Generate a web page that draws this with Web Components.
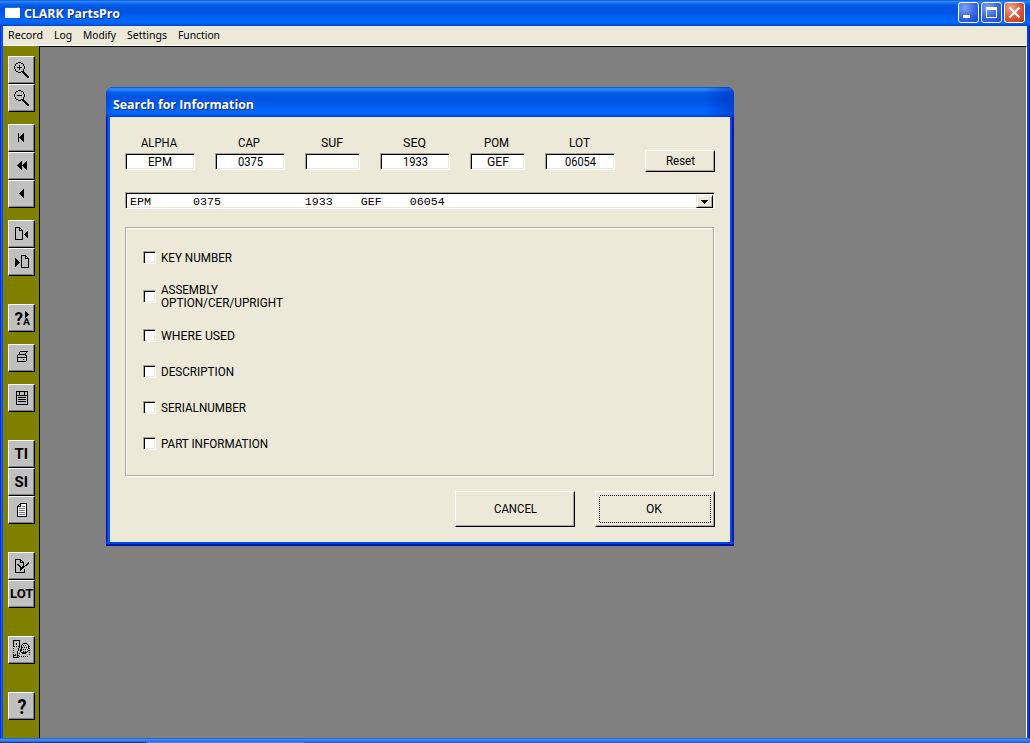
<!DOCTYPE html>
<html lang="en">
<head>
<meta charset="utf-8">
<title>CLARK PartsPro</title>
<style>
html, body { margin: 0; width: 1030px; height: 743px; overflow: hidden; }
body { font: 12.5px/14px Roboto, "Liberation Sans", sans-serif; color: #000; }
</style>
</head>
<body>
<pp-app></pp-app>

<script>
// Pixel icons: x/y is the top left corner inside the 27x28 tool button.
const TRI = ['....X', '...XX', '..XXX', '.XXXX', 'XXXXX', '.XXXX', '..XXX', '...XX', '....X'];
const LENS = (plus) => [
    '....XXX',
    '..XX...XX',
    '.X.......X',
    plus ? '.X...X...X' : '.X.......X',
    plus ? 'X....X....X' : 'X.........X',
    'X..XXXXX..X',
    plus ? 'X....X....X' : 'X.........X',
    plus ? '.X...X...X' : '.X.......X',
    '.X.......X',
    '..XX...XXX',
    '....XXX.XXX',
    '.........XXX',
    '..........XXX',
    '...........XXX',
    '............XXX',
    '.............XX'
];
const ICONS = {
    zoomin: { x: 6, y: 6, rows: LENS(true) },
    zoomout: { x: 6, y: 6, rows: LENS(false) },
    first: { x: 10, y: 9, rows: TRI.map(r => 'X' + r) },
    rewind: { x: 9, y: 9, rows: TRI.map(r => r + r) },
    prev: { x: 11, y: 9, rows: TRI },
    docprev: { x: 7, y: 7, rows: [
        'XXXXX', 'X...XX', 'X...X.X', 'X...XXXX', 'X......X....X', 'X......X...XX', 'X......X..XXX',
        'X......X.XXXX', 'X......X..XXX', 'X......X...XX', 'X......X....X', 'X......X', 'XXXXXXXX'] },
    docnext: { x: 7, y: 7, rows: [
        '......XXXXX', '......X...XX', '......X...X.X', 'X.....X...XXXX', 'XX....X......X', 'XXX...X......X', 'XXXX..X......X',
        'XXXXX.X......X', 'XXXX..X......X', 'XXX...X......X', 'XX....X......X', 'X.....X......X', '......XXXXXXXX'] },
    play: { x: 17, y: 7, rows: ['X', 'XX', 'XXX', 'XXXX', 'XXX', 'XX', 'X'] },
    print: { x: 9, y: 7, rows: [
        '...XXXXXXXX', '..X......X', '..X.....X', '.XXXXXXXX', 'X.......XX', 'X........X', 'XXXXXXXXXX',
        'X........X', 'X.....X..X', 'X........X', 'XXXXXXXXX'] },
    form: { x: 8, y: 7, rows: [
        'XXXXXXXXXXXX', 'X..X....X..X', 'X..X....X..X', 'X..X....X..X', 'XXXXXXXXXXXX', 'X..........X', 'X.XXXXXXXX.X',
        'X..........X', 'X.XXXXXXXX.X', 'X..........X', 'X.XXXXXXXX.X', 'X..........X', 'X..........X', 'XXXXXXXXXXXX'] },
    pages: { x: 9, y: 7, rows: [
        '...XXXXXXX', '..XXwwwwwX', '.XwXwwwwwX', 'XXXXwgggwX', 'XwwwwwwwwX', 'XwggggggwX', 'XwwwwwwwwX',
        'XwggggggwX', 'XwwwwwwwwX', 'XwggggggwX', 'XwwwwwwwwX', 'XwggggggwX', 'XwwwwwwwwX', 'XXXXXXXXXX'] },
    edit: { x: 7, y: 7, rows: [
        'XXXXXX', 'X....XX', 'X....X.X', 'X....XXXX....X', 'X.......X...XX', 'X.XX....X..XX', 'X..XX...X.XX',
        'X...XX.XXX', 'X....XXXX', 'X....XXX', 'X....XX..X', 'X....X...X', 'X........X', 'XXXXXXXXXX'] },
    parts: { x: 5, y: 4, rows: [
        'XXXXXXX', 'X.....X', 'X.....X', 'X..X..X...XXXX', 'X..X..X..X....X', 'X.....X.X.X.X..X', 'XX.X.XX.X......XX',
        '......X.XX.X.X.X', 'X....X..X......XX', '.....X.XX.X.X.X.', 'X....X.XX......XX', '....X..X..X.X.X', 'X...X...XXXXXX..X', '....X.X..XXXX',
        'X.X.X...........X', 'XXX.XX', 'X...X.X.X.X.X.X', 'XXXXXX'] }
};
const INKS = { X: '#000', w: '#fff', g: '#777' };

function bitmap(name) {
    const icon = ICONS[name];
    if (!icon) return '';
    let out = '';
    icon.rows.forEach((row, j) => {
        for (const m of row.matchAll(/X+|w+|g+/g)) {
            out += '<rect x="' + (icon.x + m.index) + '" y="' + (icon.y + j) + '" width="' + m[0].length +
                '" height="1" fill="' + INKS[m[0][0]] + '"/>';
        }
    });
    return out;
}

function define(name, html, setup) {
    const tpl = document.createElement('template');
    tpl.innerHTML = html;
    customElements.define(name, class extends HTMLElement {
        connectedCallback() {
            if (this.shadowRoot) return;
            this.attachShadow({ mode: 'open' }).appendChild(tpl.content.cloneNode(true));
            if (setup) setup(this, this.shadowRoot);
        }
    });
}

// One line of text condensed or stretched to a set width.
define('pp-text', `
<style>
:host { display: flex; flex: none; text-align: left; }
span { flex: none; white-space: nowrap; transform-origin: 0 50%; }
</style>
<span><slot></slot></span>`, (el, root) => {
    const w = +el.getAttribute('w');
    const span = root.querySelector('span');
    span.style.transform = 'scaleX(' + w / span.getBoundingClientRect().width + ')';
    el.style.width = w + 'px';
});

define('pp-tool', `
<style>
:host { display: block; position: relative; box-sizing: border-box; width: 27px; height: 28px; background: #c0c0c0;
    border: 1px solid #000; border-color: #fff #000 #000 #fff; box-shadow: inset -1px -1px #808080; }
:host([gap="s"]) { margin-top: 12px; }
:host([gap="l"]) { margin-top: 28px; }
svg { position: absolute; left: -1px; top: -1px; width: 27px; height: 28px; }
text { font: bold 15px Roboto, "Liberation Sans", sans-serif; }
</style>
<svg viewBox="0 0 27 28"><g shape-rendering="crispEdges"></g></svg>`, (el, root) => {
    const svg = root.querySelector('svg');
    svg.querySelector('g').innerHTML = bitmap(el.getAttribute('icon'));
    for (const part of (el.getAttribute('label') || '').split(';').filter(Boolean)) {
        const [s, x, y, size, w] = part.split(',');
        svg.insertAdjacentHTML('beforeend', '<text x="' + x + '" y="' + y + '" textLength="' + w +
            '" lengthAdjust="spacingAndGlyphs" style="font-size:' + size + 'px">' + s + '</text>');
    }
});

define('pp-toolbar', `
<style>
:host { display: flex; flex-direction: column; box-sizing: border-box; width: 37px; padding: 10px 0 0 5px;
    background: #808000; border-right: 1px solid #000; }
</style>
<slot></slot>`);

define('pp-menubar', `
<style>
:host { display: flex; gap: 11px; box-sizing: border-box; height: 20px; padding: 1px 0 0 5px; background: #ece9d8;
    border-bottom: 1px solid #fff; font: 11px/15px "Noto Sans", "Open Sans", sans-serif; }
</style>
<slot></slot>`);

define('pp-caption-button', `
<style>
:host { display: block; box-sizing: border-box; width: 21px; height: 21px; border: 1px solid #fff; border-radius: 3px;
    background: radial-gradient(circle at 30% 25%, #7ea2f5, #3c68e4 50%, #2453d4 80%, #1e49c4); }
:host([kind="close"]) { background: radial-gradient(circle at 30% 25%, #f0a088, #e0583a 50%, #d0431d 80%, #b5320f); }
svg { display: block; width: 19px; height: 19px; }
</style>
<svg viewBox="0 0 19 19" fill="none" stroke="#fff"></svg>`, (el, root) => {
    root.querySelector('svg').innerHTML = {
        min: '<path fill="#fff" stroke="none" d="M4 12h7v3H4z"/>',
        max: '<path fill="#fff" stroke="none" fill-rule="evenodd" d="M4 4h11v11H4zM5 7v7h9V7z"/>',
        close: '<path stroke-width="2.2" d="M4.5 4.5l10 10M14.5 4.5l-10 10"/>'
    }[el.getAttribute('kind')];
});

define('pp-titlebar', `
<style>
:host { display: flex; align-items: center; box-sizing: border-box; height: 26px; padding: 0 5px 1px; color: #fff;
    background: linear-gradient(#0848c8 0, #2a86f8 4%, #2480f4 8%, #0460ea 17%, #0054e3 30%, #0055e5 50%, #0066fc 75%, #0266ff 88%, #0052e0 95%, #0040c0);
    font: bold 13px/18px "Open Sans", "Noto Sans", sans-serif; text-shadow: 1px 1px #0a2f8f; }
.icon { width: 15px; height: 11px; margin: 0 4px 0 0; }
.name { flex: 1; display: flex; }
.buttons { display: flex; gap: 2px; }
</style>
<svg class="icon" viewBox="0 0 15 11" shape-rendering="crispEdges">
    <path fill="#fff" d="M0 0h15v11H0z"/><path fill="#1c70e8" d="M0 0h15v1H0z"/><path fill="#e86038" d="M12 0h2v1h-2z"/>
</svg>
<div class="name"><slot></slot></div>
<div class="buttons">
    <pp-caption-button kind="min"></pp-caption-button>
    <pp-caption-button kind="max"></pp-caption-button>
    <pp-caption-button kind="close"></pp-caption-button>
</div>`);

define('pp-field', `
<style>
:host { display: flex; flex-direction: column; align-items: center; width: 70px; }
:host([short]) { width: 55px; }
.label { height: 18px; line-height: 15px; padding-right: 2px; }
.box { display: flex; justify-content: center; box-sizing: border-box; width: 100%; height: 17px; background: #fff; line-height: 15px;
    border: 1px solid #fff; border-color: #aca899 #fff #fff #aca899; box-shadow: inset 1px 1px #000, inset -1px -1px #ece9d8; }
</style>
<div class="label"><slot name="label"></slot></div>
<div class="box"><slot></slot></div>`);

define('pp-button', `
<style>
:host { display: flex; align-items: center; justify-content: center; position: relative; box-sizing: border-box;
    width: 120px; height: 36px; background: #ece9d8; border: 1px solid #000; border-color: #fff #000 #000 #fff;
    box-shadow: inset -1px -1px #aca899; }
:host([small]) { width: 70px; height: 22px; }
rect { fill: none; stroke: #000; stroke-dasharray: 1 1; }
svg { display: none; position: absolute; left: 3px; top: 3px; width: 112px; height: 28px; }
:host([focused]) { padding-right: 3px; }
:host([focused]) svg { display: block; }
</style>
<slot></slot>
<svg shape-rendering="crispEdges"><rect x=".5" y=".5" width="111" height="27"/></svg>`);

define('pp-combo', `
<style>
:host { display: flex; box-sizing: border-box; height: 17px; padding: 2px 1px 1px 4px; background: #fff;
    border: 1px solid #fff; border-color: #aca899 #fff #fff #aca899; box-shadow: inset 1px 1px #000, inset -1px -1px #ece9d8; }
.value { flex: 1; white-space: pre; font: 11.67px/15px "Liberation Mono", monospace; }
.drop { box-sizing: border-box; width: 17px; height: 13px; background: #ece9d8;
    border: 1px solid #000; border-color: #ece9d8 #000 #000 #ece9d8; box-shadow: inset 1px 1px #fff, inset -1px -1px #aca899; }
svg { display: block; width: 15px; height: 11px; }
</style>
<div class="value"><slot></slot></div>
<div class="drop"><svg viewBox="0 0 15 11" shape-rendering="crispEdges">
    <path d="M4 4h7v1H4zM5 5h5v1H5zM6 6h3v1H6zM7 7h1v1H7z"/></svg></div>`);

define('pp-check', `
<style>
:host { display: flex; align-items: center; gap: 5px; height: 13px; line-height: 13px; }
.box { flex: none; box-sizing: border-box; width: 13px; height: 13px; background: #fff;
    border: 1px solid #fff; border-color: #aca899 #fff #fff #aca899; box-shadow: inset 1px 1px #000, inset -1px -1px #ece9d8; }
.text { display: flex; flex-direction: column; padding-bottom: 1px; }
</style>
<div class="box"></div>
<div class="text"><slot></slot></div>`);

define('pp-group', `
<style>
:host { display: flex; flex-direction: column; gap: 23px; box-sizing: border-box; height: 250px; padding: 23px 0 0 17px;
    border: 1px solid #aca899; border-right-color: #fff; border-bottom-color: #fff;
    box-shadow: inset 1px 1px #fff, inset -1px -1px #aca899; }
</style>
<slot></slot>`);

define('pp-dialog', `
<style>
:host { display: flex; flex-direction: column; box-sizing: border-box; width: 628px; height: 459px; border-radius: 7px 7px 0 0;
    overflow: hidden; background: linear-gradient(90deg, #0014b8 0, #0014b8 1px, #0831d9 1px, #0831d9 2px, #1060f0 2px, #0855e8 4px,
    #0048f0 4px, #0048f0 calc(100% - 2px), #0018a0 calc(100% - 2px)); }
.title { box-sizing: border-box; height: 30px; padding: 8px 0 0 7px; color: #fff;
    background: linear-gradient(90deg, #0030c060 0, #0030c000 6px calc(100% - 30px), #0030c0a0 100%),
    linear-gradient(#0040c8 0, #2a86f8 4%, #2a86f8 9%, #0460ea 18%, #0054e3 32%, #0055e5 50%, #0066fc 75%, #0266ff 88%, #0052e0 95%, #0040c0);
    font: bold 13px/18px "Open Sans", "Noto Sans", sans-serif; text-shadow: 1px 1px #0a2f8f; }
.body { flex: 1; margin: 0 4px; padding: 18px 15px 0; background: #ece9d8; }
.foot { height: 4px; background: linear-gradient(#0048f0 50%, #0014a0 50%); }
</style>
<div class="title"><slot name="title"></slot></div>
<div class="body"><slot></slot></div>
<div class="foot"></div>`);

define('pp-search', `
<style>
:host { display: block; }
.fields { display: flex; gap: 20px; height: 57px; }
.fields pp-button { margin: 15px 0 0 10px; }
pp-group { margin-top: 18px; }
.tall { margin: 3px 0; }
.actions { display: flex; justify-content: flex-end; gap: 20px; margin-top: 14px; }
</style>
<pp-dialog>
    <pp-text slot="title" w="141">Search for Information</pp-text>
    <div class="fields">
        <pp-field><pp-text slot="label" w="36">ALPHA</pp-text><pp-text w="24">EPM</pp-text></pp-field>
        <pp-field><pp-text slot="label" w="22">CAP</pp-text><pp-text w="25">0375</pp-text></pp-field>
        <pp-field short><pp-text slot="label" w="22">SUF</pp-text></pp-field>
        <pp-field><pp-text slot="label" w="23">SEQ</pp-text><pp-text w="25">1933</pp-text></pp-field>
        <pp-field short><pp-text slot="label" w="25">POM</pp-text><pp-text w="22">GEF</pp-text></pp-field>
        <pp-field><pp-text slot="label" w="21">LOT</pp-text><pp-text w="31">06054</pp-text></pp-field>
        <pp-button small><pp-text w="29">Reset</pp-text></pp-button>
    </div>
    <pp-combo>EPM      0375            1933    GEF    06054</pp-combo>
    <pp-group>
        <pp-check><pp-text w="71">KEY NUMBER</pp-text></pp-check>
        <pp-check class="tall"><pp-text w="57">ASSEMBLY</pp-text><pp-text w="122">OPTION/CER/UPRIGHT</pp-text></pp-check>
        <pp-check><pp-text w="74">WHERE USED</pp-text></pp-check>
        <pp-check><pp-text w="73">DESCRIPTION</pp-text></pp-check>
        <pp-check><pp-text w="85">SERIALNUMBER</pp-text></pp-check>
        <pp-check><pp-text w="107">PART INFORMATION</pp-text></pp-check>
    </pp-group>
    <div class="actions">
        <pp-button><pp-text w="43">CANCEL</pp-text></pp-button>
        <pp-button focused><pp-text w="16">OK</pp-text></pp-button>
    </div>
</pp-dialog>`);

define('pp-app', `
<style>
:host { display: flex; flex-direction: column; width: 1030px; height: 743px;
    background: linear-gradient(90deg, #0028d0 0, #0028d0 1px, #1060f8 1px, #1060f8 2px, #0050e8 2px, #0050e8 1027px, #0040e0 1027px, #0040e0 1029px, #0018a0 1029px); }
.frame { flex: 1; display: flex; flex-direction: column; margin: 0 3px; }
.main { flex: 1; display: flex; }
.desk { flex: 1; position: relative; background: #808080; border-top: 1px solid #000; border-right: 1px solid #fff; }
pp-search { position: absolute; left: 66px; top: 40px; }
.taskbar { height: 5px; background: linear-gradient(90deg, #0c3f9c 0 146px, #3c8cf0 146px 304px, #2462d4 304px) 0 4px / 100% 1px no-repeat,
    linear-gradient(#2664d8 0 1px, #3f8cf0 1px 2px, #3a80e8 2px 3px, #2c6cdc 3px); }
</style>
<pp-titlebar><pp-text w="96">CLARK PartsPro</pp-text></pp-titlebar>
<div class="frame">
    <pp-menubar>
        <pp-text w="35">Record</pp-text><pp-text w="18">Log</pp-text><pp-text w="33">Modify</pp-text><pp-text w="40">Settings</pp-text><pp-text w="42">Function</pp-text>
    </pp-menubar>
    <div class="main">
        <pp-toolbar>
            <pp-tool icon="zoomin"></pp-tool>
            <pp-tool icon="zoomout"></pp-tool>
            <pp-tool icon="first" gap="s"></pp-tool>
            <pp-tool icon="rewind"></pp-tool>
            <pp-tool icon="prev"></pp-tool>
            <pp-tool icon="docprev" gap="s"></pp-tool>
            <pp-tool icon="docnext"></pp-tool>
            <pp-tool icon="play" gap="l" label="?,6.5,21,19,8.5;A,15,21,9.5,7"></pp-tool>
            <pp-tool icon="print" gap="s"></pp-tool>
            <pp-tool icon="form" gap="s"></pp-tool>
            <pp-tool gap="l" label="TI,6.5,19,15,13.5"></pp-tool>
            <pp-tool label="SI,6.5,19,15,13.5"></pp-tool>
            <pp-tool icon="pages"></pp-tool>
            <pp-tool icon="edit" gap="l"></pp-tool>
            <pp-tool label="LOT,2,18,13,23.5"></pp-tool>
            <pp-tool icon="parts" gap="l"></pp-tool>
            <pp-tool gap="l" label="?,9.5,22,21,9"></pp-tool>
        </pp-toolbar>
        <div class="desk"><pp-search></pp-search></div>
    </div>
</div>
<div class="taskbar"></div>`);
</script>
</body>
</html>
